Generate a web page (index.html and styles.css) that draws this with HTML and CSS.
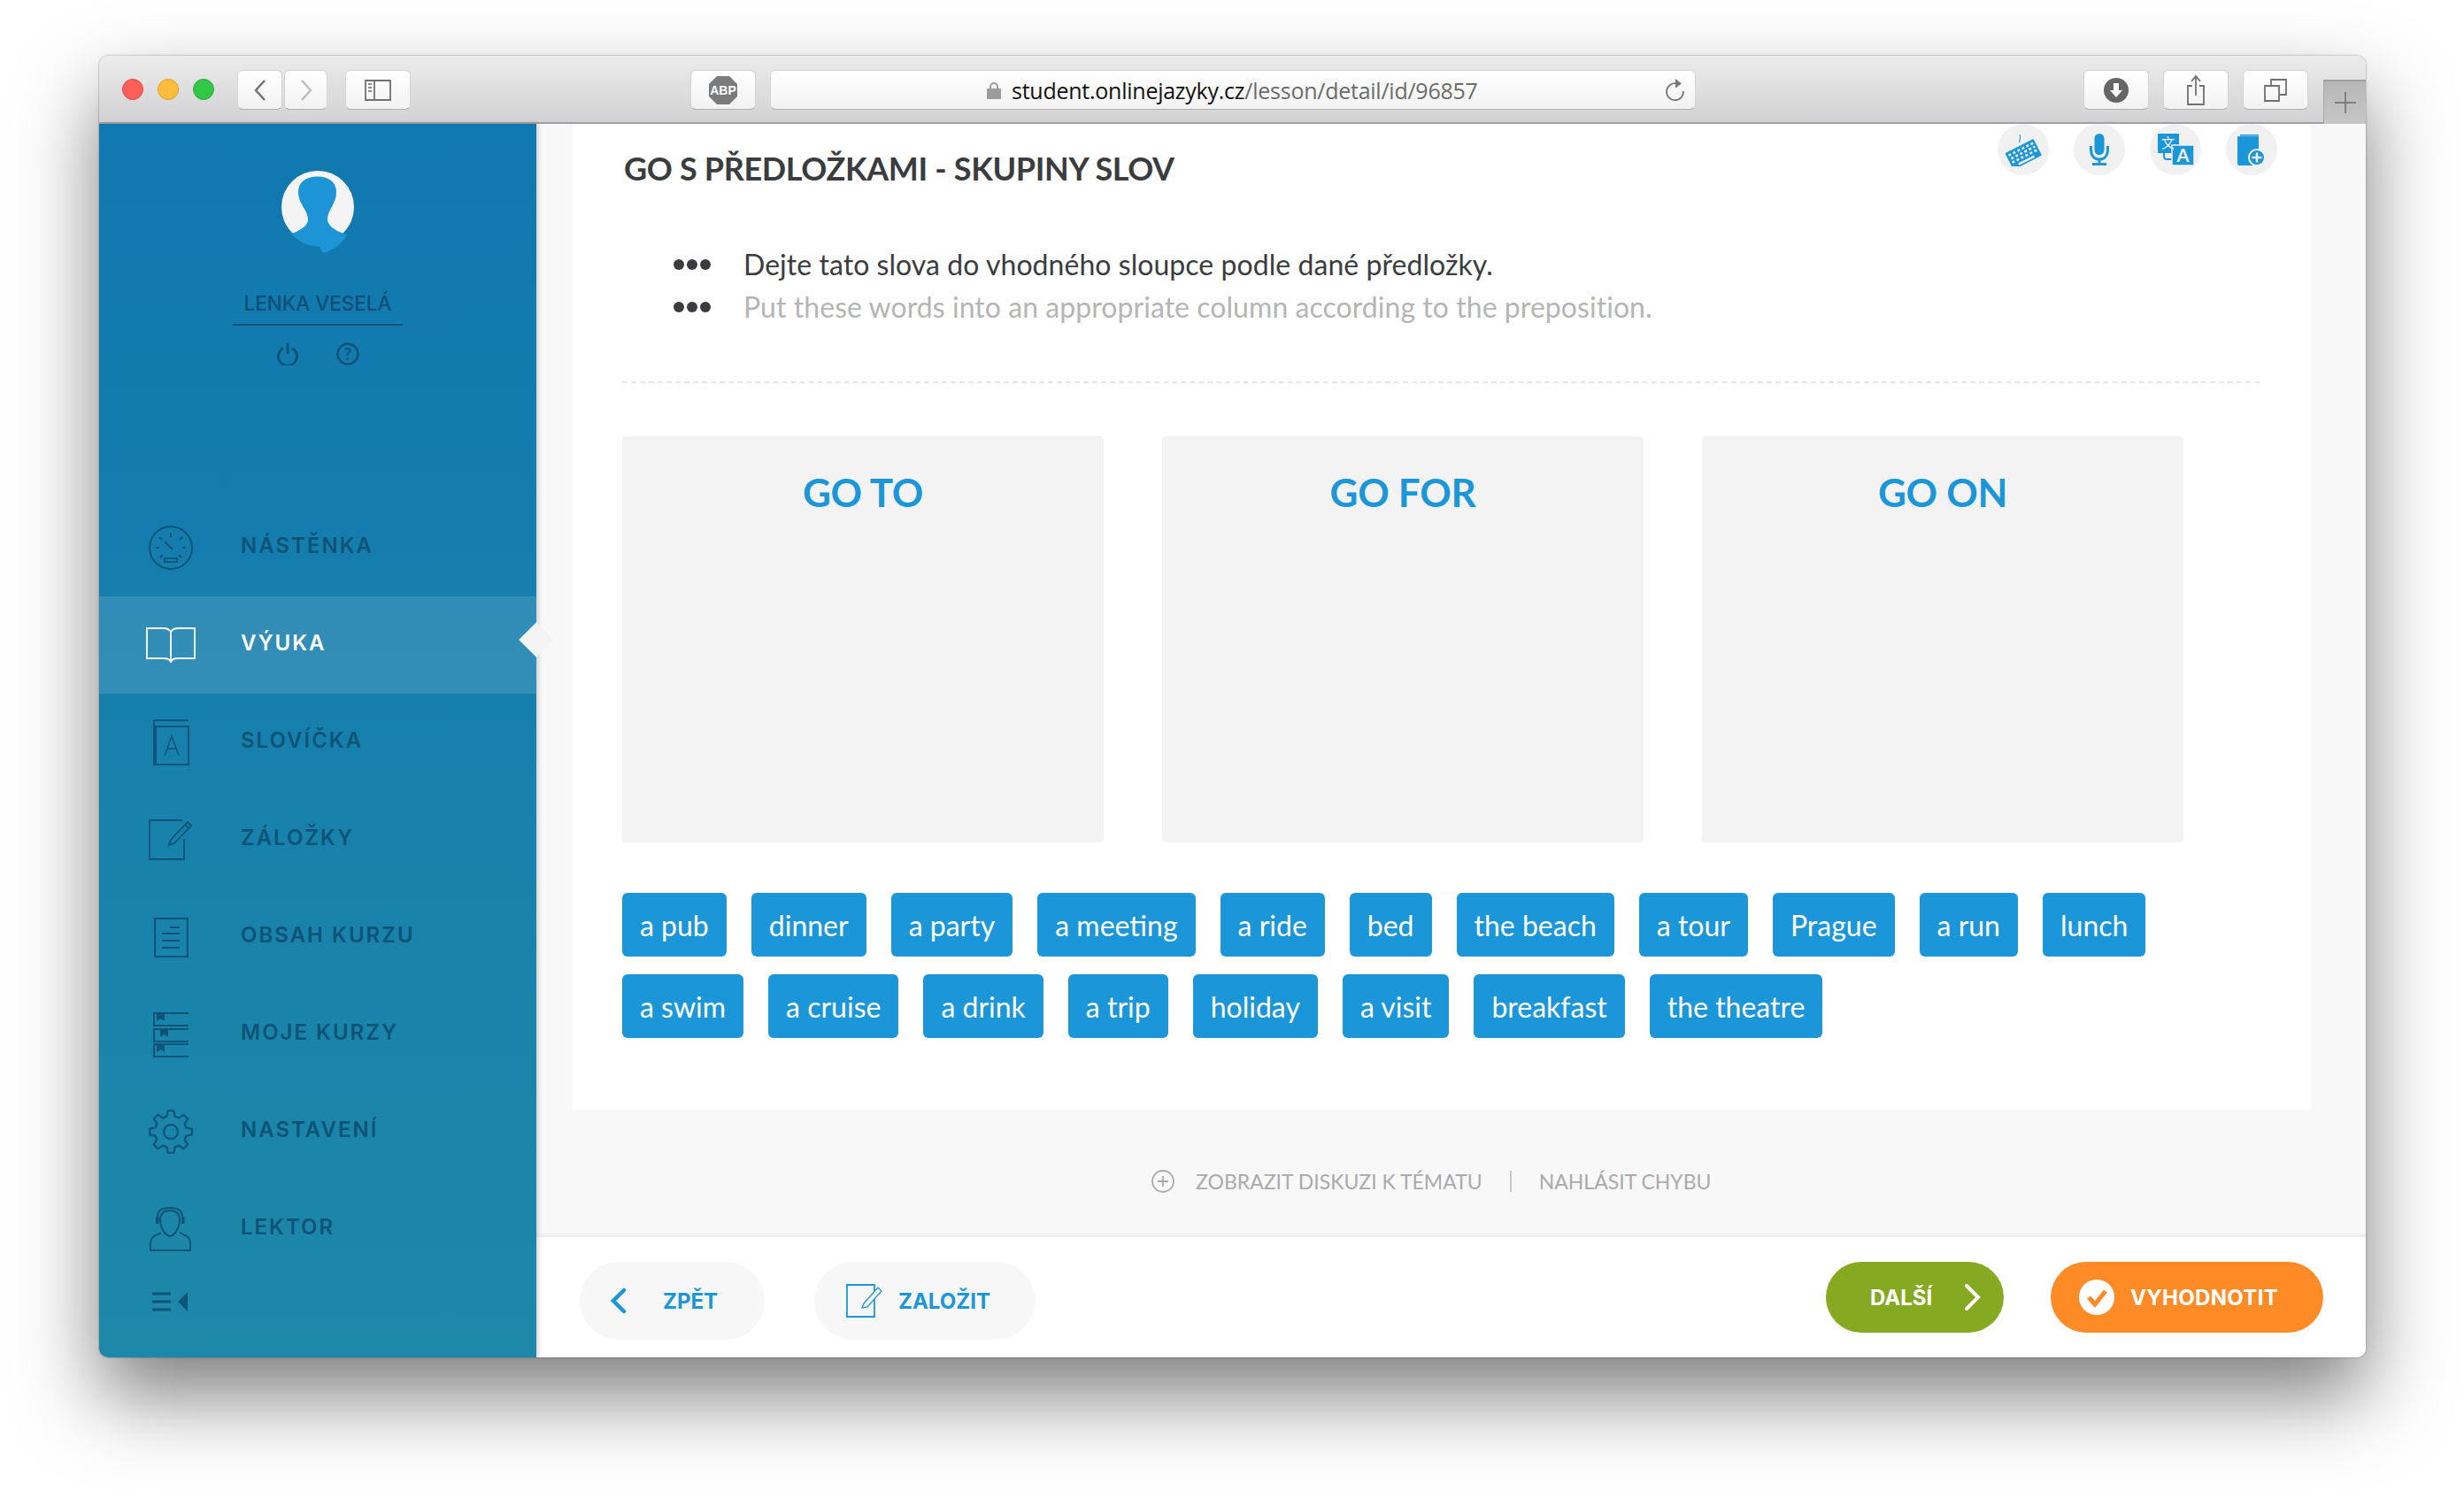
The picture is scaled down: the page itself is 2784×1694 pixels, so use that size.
FILE: index.html

```html
<!DOCTYPE html>
<html lang="cs">
<head>
  <meta charset="UTF-8" />
  <title>Go s předložkami - skupiny slov</title>
  <link rel="stylesheet" href="styles.css">
</head>
<body>
<div class="window">
  <div class="toolbar">
    <div class="lights"><i class="red"></i><i class="yellow"></i><i class="green"></i></div>
    <div class="tb-btn nav-back"><svg width="16" height="26" viewBox="0 0 16 26"><path d="M13 2 3 13l10 11" fill="none" stroke="#6f6f6f" stroke-width="2.4"/></svg></div>
    <div class="tb-btn nav-fwd"><svg width="16" height="26" viewBox="0 0 16 26"><path d="m3 2 10 11L3 24" fill="none" stroke="#bcbcbc" stroke-width="2.4"/></svg></div>
    <div class="tb-btn side-btn"><svg width="30" height="24" viewBox="0 0 30 24"><path d="M1 1h28v22H1zM11 1v22" fill="none" stroke="#707070" stroke-width="1.8"/><path d="M4 5h4M4 9h4M4 13h4" stroke="#8a8a8a" stroke-width="2"/></svg></div>
    <div class="tb-btn abp-btn"><svg width="34" height="34" viewBox="0 0 34 34"><path d="M10 1h14l9 9v14l-9 9H10l-9-9V10z" fill="#7b7b7b"/><text x="17" y="22" text-anchor="middle" class="abp-text">ABP</text></svg></div>
    <div class="tb-btn url-bar">
      <svg class="lock" width="16" height="20" viewBox="0 0 16 20"><path d="M4 9V6a4 4 0 0 1 8 0v3" fill="none" stroke="#9c9c9c" stroke-width="2"/><rect y="8" width="16" height="12" rx="1" fill="#9c9c9c"/></svg>
      <span class="url"><b>student.onlinejazyky.cz</b>/lesson/detail/id/96857</span>
      <svg class="reload" width="24" height="28" viewBox="0 0 24 28"><path d="M14 6.500A9.500 9.500 0 1 0 21 15" fill="none" stroke="#777" stroke-width="1.800"/><path d="M12 1l7 5.500-7 5z" fill="#777"/></svg>
    </div>
    <div class="tb-btn tb-right first"><svg width="30" height="30" viewBox="0 0 30 30"><circle cx="15" cy="15" r="14" fill="#666"/><path d="M12 7h6v8h4l-7 8-7-8h4z" fill="#fff"/></svg></div>
    <div class="tb-btn tb-right"><svg width="24" height="36" viewBox="0 0 24 36"><path d="M8 13H3v21h18V13h-5M12 24V3M7 8l5-6 5 6" fill="none" stroke="#707070" stroke-width="1.800"/></svg></div>
    <div class="tb-btn tb-right"><svg width="26" height="26" viewBox="0 0 26 26"><path d="M8 7V1h17v17h-7" fill="none" stroke="#707070" stroke-width="1.800"/><path d="M1 8h16v17H1z" fill="none" stroke="#707070" stroke-width="1.800"/></svg></div>
    <div class="new-tab"><svg width="24" height="24" viewBox="0 0 24 24"><path d="M12 0v24M0 12h24" stroke="#6e6e6e" stroke-width="1.500"/></svg></div>
  </div>

  <div class="app">
    <aside class="sidebar">
      <div class="profile">
        <svg class="avatar" width="84" height="94" viewBox="0 0 84 94">
          <circle cx="42" cy="41" r="41" fill="#f4f4f4"/>
          <path d="M42 6.500C28 6.500 20 13 20 24c0 14 11 20 11 31 0 7-9 13-19 16 6 7 16 14 32 15l4 7c12-3 22-11 27-21-12-3-22-10-22-17 0-11 10-17 10-31C63 13 55 6.500 42 6.500z" fill="#1c94d6"/>
        </svg>
        <div class="user-name">LENKA VESELÁ</div>
        <div class="user-links">
          <svg width="24" height="26" viewBox="0 0 24 26"><path d="M7 6.500a10.500 10.500 0 1 0 10 0M12 1v12" fill="none" stroke="#0e5378" stroke-width="3"/></svg>
          <svg width="26" height="26" viewBox="0 0 26 26"><circle cx="13" cy="13" r="11.500" fill="none" stroke="#0e5378" stroke-width="2.500"/><text x="13" y="19.500" text-anchor="middle" class="help-text">?</text></svg>
        </div>
      </div>

      <nav class="menu">
        <a class="menu-item"><span class="menu-icon">
          <svg width="50" height="50" viewBox="0 0 50 50" fill="none" stroke="#0e5378" stroke-width="1.800"><circle cx="25" cy="25" r="24"/><path d="M25 8v5M12 13l3 3M38 13l-3 3M8 25h4M38 25h4M13 36l3-3M37 36l-3-3M18 18l9 9" stroke-width="2"/><rect x="18" y="37" width="14" height="4"/></svg>
        </span><span class="menu-label">NÁSTĚNKA</span></a>
        <a class="menu-item active"><span class="menu-icon">
          <svg width="56" height="40" viewBox="0 0 56 40" fill="none" stroke="#fff" stroke-width="1.800"><path d="M28 5c-2-3-5-4-8-4H1v34h19c4 0 7 1 8 4 1-3 4-4 8-4h19V1H36c-3 0-6 1-8 4zM28 5v34"/></svg>
        </span><span class="menu-label">VÝUKA</span></a>
        <a class="menu-item"><span class="menu-icon">
          <svg width="42" height="52" viewBox="0 0 42 52" fill="none" stroke="#0e5378" stroke-width="1.800"><path d="M41 1H2v50h39V8H3" /><path d="M3 8v43" stroke-width="4"/><path d="m14 41 8-22 8 22M17 33h11" stroke-width="1.500"/></svg>
        </span><span class="menu-label">SLOVÍČKA</span></a>
        <a class="menu-item"><span class="menu-icon">
          <svg width="50" height="46" viewBox="0 0 50 46" fill="none" stroke="#0e5378" stroke-width="1.800"><path d="M38 1H1v44h39V22"/><path d="m25 23 19-20 4 4-19 20-6 2zM41 6l4 4"/></svg>
        </span><span class="menu-label">ZÁLOŽKY</span></a>
        <a class="menu-item"><span class="menu-icon">
          <svg width="39" height="45" viewBox="0 0 39 45" fill="none" stroke="#0e5378" stroke-width="2.200"><path d="M1 1h37v43H1z"/><path d="M18 11h11M9 18h20M9 26h20M9 34h20"/></svg>
        </span><span class="menu-label">OBSAH KURZU</span></a>
        <a class="menu-item"><span class="menu-icon">
          <svg width="40" height="51" viewBox="0 0 40 51" fill="none" stroke="#0e5378" stroke-width="2.200"><path d="M40 1H1v14h39M40 19H1v14h39M40 36H1v14h39"/><path d="M4 1h9v9l-4.500-3L4 10zM8 19h9v9l-4.500-3L8 28zM4 36h9v9l-4.500-3L4 45z" fill="#0e5378" stroke="none"/></svg>
        </span><span class="menu-label">MOJE KURZY</span></a>
        <a class="menu-item"><span class="menu-icon">
          <svg width="50" height="50" viewBox="0 0 50 50" fill="none" stroke="#0e5378" stroke-width="2.200" stroke-linejoin="round"><circle cx="25" cy="25" r="8"/><path d="M20.340 7.610 21.660 1.230h6.680l1.320 6.380L34 9.410l5.440-3.580 4.730 4.730L40.590 16l1.800 4.340 6.380 1.320v6.680l-6.380 1.320L40.590 34l3.580 5.440-4.730 4.730L34 40.590l-4.340 1.800-1.320 6.380h-6.680l-1.320-6.380L16 40.590l-5.440 3.580-4.730-4.730L9.410 34l-1.800-4.340-6.380-1.320v-6.680l6.380-1.320L9.410 16l-3.580-5.440 4.730-4.730L16 9.410z"/></svg>
        </span><span class="menu-label">NASTAVENÍ</span></a>
        <a class="menu-item"><span class="menu-icon">
          <svg width="48" height="50" viewBox="0 0 48 50" fill="none" stroke="#0e5378" stroke-width="2"><path d="M9 11C9 4 15 1 23 1s14 3 14 10"/><path d="M7 11h3.500v8H7zM36 11h3.500v8H36z" fill="#0e5378" stroke="none"/><path d="M23 4c-8 0-11 5-11 11 0 8 5 17 11 18 6-1 11-10 11-18 0-6-3-11-11-11z"/><path d="M13 29c-5 3-12 4-12 11v9h45v-9c0-7-7-8-12-11"/></svg>
        </span><span class="menu-label">LEKTOR</span></a>
      </nav>

      <div class="collapse"><svg width="40" height="22" viewBox="0 0 40 22"><path d="M0 2h21M0 11h21M0 20h21" stroke="#0e5378" stroke-width="3"/><path d="M40 0v22L29 11z" fill="#0e5378"/></svg></div>
    </aside>

    <main class="main">
      <div class="content">
        <section class="panel">
          <div class="panel-head">
            <h1>GO S PŘEDLOŽKAMI - SKUPINY SLOV</h1>
            <div class="tools">
              <span class="tool"><svg width="42" height="38" viewBox="0 0 42 38"><path d="M17 11c-1-3 2-5 0-9" fill="none" stroke="#1b96d9" stroke-width="1.200"/><g transform="rotate(-27 21 24)"><rect x="3" y="14" width="36" height="21" rx="1.500" fill="#1b96d9"/><path d="M5.500 18h32M6.500 22.500h30M5.500 27h32" stroke="#f1f1f1" stroke-width="2.600" stroke-dasharray="3 2.600"/><path d="M11 32h20" stroke="#f1f1f1" stroke-width="2.400"/></g></svg></span>
              <span class="tool"><svg width="22" height="36" viewBox="0 0 22 36"><rect x="5.500" width="11" height="24" rx="5.500" fill="#1b96d9"/><path d="M1.500 14v4c0 7 4 11 9.500 11s9.500-4 9.500-11v-4M11 29v5" fill="none" stroke="#1b96d9" stroke-width="3"/><path d="M3 33h16v3H3z" fill="#1b96d9"/></svg></span>
              <span class="tool"><svg width="42" height="36" viewBox="0 0 42 36"><rect x="1" width="24" height="22" fill="#1b96d9"/><path d="M8 22v4c0 2 2 3 4 3h5" fill="none" stroke="#1b96d9" stroke-width="2"/><rect x="17" y="13" width="25" height="23" fill="#1b96d9" stroke="#f1f1f1" stroke-width="1.500"/><text x="12.500" y="16" text-anchor="middle" class="tool-zh">文</text><text x="29.500" y="31.500" text-anchor="middle" class="tool-a">A</text></svg></span>
              <span class="tool"><svg width="32" height="36" viewBox="0 0 32 36"><path d="M3 1h21v1.500H3z" fill="#1b96d9"/><path d="M0 4c0-1 1-1 2-1h22v33H2c-1 0-2-1-2-2z" fill="#1b96d9"/><circle cx="22" cy="27" r="9" fill="#1b96d9" stroke="#f1f1f1" stroke-width="2"/><path d="M22 21.500v11M16.500 27h11" stroke="#f1f1f1" stroke-width="2.500"/></svg></span>
            </div>
          </div>

          <div class="instructions">
            <div class="instr-line"><span class="dots"><i></i><i></i><i></i></span>Dejte tato slova do vhodného sloupce podle dané předložky.</div>
            <div class="instr-line muted"><span class="dots"><i></i><i></i><i></i></span>Put these words into an appropriate column according to the preposition.</div>
          </div>

          <div class="columns">
            <div class="column">GO TO</div>
            <div class="column">GO FOR</div>
            <div class="column">GO ON</div>
          </div>

          <div class="words">
            <span class="word">a pub</span>
            <span class="word">dinner</span>
            <span class="word">a party</span>
            <span class="word">a meeting</span>
            <span class="word">a ride</span>
            <span class="word">bed</span>
            <span class="word">the beach</span>
            <span class="word">a tour</span>
            <span class="word">Prague</span>
            <span class="word">a run</span>
            <span class="word">lunch</span>
            <span class="word">a swim</span>
            <span class="word">a cruise</span>
            <span class="word">a drink</span>
            <span class="word">a trip</span>
            <span class="word">holiday</span>
            <span class="word">a visit</span>
            <span class="word">breakfast</span>
            <span class="word">the theatre</span>
          </div>
        </section>

        <div class="links">
          <svg width="26" height="26" viewBox="0 0 26 26" fill="none" stroke="#aaa" stroke-width="1.800"><circle cx="13" cy="13" r="12"/><path d="M13 7v12M7 13h12"/></svg>
          <span class="link-a">ZOBRAZIT DISKUZI K TÉMATU</span>
          <span class="link-sep"></span>
          <span>NAHLÁSIT CHYBU</span>
        </div>
      </div>

      <div class="actions">
        <a class="pill back"><svg width="18" height="30" viewBox="0 0 18 30"><path d="M15 3 3 15l12 12" fill="none" stroke="#1b96d9" stroke-width="4.500" stroke-linecap="round"/></svg>ZPĚT</a>
        <a class="pill bookmark"><svg width="41" height="38" viewBox="0 0 41 38" fill="none" stroke="#1b96d9" stroke-width="1.800"><path d="M1 1h31v36H1z"/><path d="m20 22 16-18 4 4-16 18-6 1z" fill="#f7f7f7" stroke-width="1.300"/></svg>ZALOŽIT</a>
        <a class="pill next">DALŠÍ<svg width="20" height="30" viewBox="0 0 20 30"><path d="m3 2 13 13L3 28" fill="none" stroke="#fff" stroke-width="4" stroke-linecap="round"/></svg></a>
        <a class="pill submit"><svg width="40" height="40" viewBox="0 0 40 40"><circle cx="20" cy="20" r="20" fill="#fff"/><path d="m11 20 7 8 12-15" fill="none" stroke="#ff8b26" stroke-width="5"/></svg>VYHODNOTIT</a>
      </div>
    </main>
  </div>
</div>
</body>
</html>
```

FILE: styles.css

```css
* { box-sizing: border-box; }
html, body { margin: 0; height: 100%; }
body { background: #fff; font-family: Lato, "Noto Sans", sans-serif; color: #3a3c40; overflow: hidden; }
.window { width: 2561px; height: 1471px; margin: 63px 0 0 112px; border-radius: 10px; display: flex; flex-direction: column; overflow: hidden; box-shadow: 0 44px 90px rgba(0, 0, 0, 0.5), 0 0 2px rgba(0, 0, 0, 0.5); }

.toolbar { height: 77px; flex: none; display: flex; align-items: flex-start; padding: 16px 0 0 26px; background: linear-gradient(#ececec, #d2d1d3); border-bottom: 2px solid #a2a1a4; position: relative; }
.lights { display: flex; gap: 16px; margin: 10px 26px 0 0; }
.lights i { display: block; width: 24px; height: 24px; border-radius: 50%; }
.red { background: #fc5f58; border: 1px solid #df4a43; }
.yellow { background: #fdbc3a; border: 1px solid #dfa02c; }
.green { background: #33c748; border: 1px solid #2aaa3b; }
.tb-btn { height: 45px; display: flex; align-items: center; justify-content: center; background: linear-gradient(#fff, #f2f2f2); border: 1px solid #d3d2d4; border-bottom-color: #aeadaf; border-radius: 6px; flex: none; }
.nav-back { width: 51px; margin-right: 2px; }
.nav-fwd { width: 49px; margin-right: 20px; }
.side-btn { width: 74px; margin-right: 316px; }
.abp-btn { width: 74px; margin-right: 16px; }
.abp-text { font: 700 14px "Liberation Sans", sans-serif; fill: #fff; }
.url-bar { width: 1046px; justify-content: flex-start; padding-left: 244px; margin-right: 438px; }
.lock { margin-right: 12px; }
.url { font-family: "Open Sans", sans-serif; font-size: 25px; color: #6b6b6b; letter-spacing: -0.25px; }
.url b { font-weight: 400; color: #111; }
.reload { margin-left: auto; margin-right: 10px; }
.tb-right { width: 74px; margin-right: 16px; }
.new-tab { position: absolute; top: 27px; right: 0; width: 48px; height: 50px; display: flex; align-items: center; justify-content: center; background: linear-gradient(#b6b6b6, #c6c6c6); border-top: 2px solid #9e9e9e; border-left: 1px solid #a8a8a8; }

.app { flex: 1; display: flex; min-height: 0; }

.sidebar { width: 494px; flex: none; background: linear-gradient(#1078b0, #1d88a8); display: flex; flex-direction: column; position: relative; z-index: 2; box-shadow: 2px 0 5px rgba(0, 0, 0, 0.18); }
.profile { height: 424px; flex: none; display: flex; flex-direction: column; align-items: center; padding-top: 53px; }
.avatar { margin: 0 0 0 -1px; }
.user-name { width: 192px; margin-top: 42px; padding-bottom: 10px; text-align: center; border-bottom: 2px solid #0d4f76; color: #0d4f76; font-family: Inter, sans-serif; font-size: 22.500px; font-weight: 500; white-space: nowrap; }
.user-links { display: flex; align-items: center; gap: 43px; margin-top: 19px; }
.help-text { font: 700 19px Lato, sans-serif; fill: #0e5378; }
.menu-item { height: 110px; display: flex; align-items: center; padding-left: 53px; color: #0e5378; font-family: Inter, sans-serif; font-size: 24px; font-weight: 600; letter-spacing: 2px; position: relative; }
.menu-icon { width: 56px; margin-right: 51px; display: flex; justify-content: center; }
.menu-label { margin-bottom: 6px; }
.active { background: rgba(255, 255, 255, 0.12); color: #fff; }
.active::after { content: ""; position: absolute; right: -14px; top: 35px; width: 28px; height: 28px; background: #f3f3f3; transform: rotate(45deg); }
.collapse { padding: 16px 0 0 60px; }

.main { flex: 1; min-width: 0; display: flex; flex-direction: column; overflow: hidden; }
.content { flex: 1; background: #f8f8f8; padding: 0 62px 0 41px; }
.panel { height: 1114px; background: #fff; padding: 0 32px 0 56px; overflow: hidden; }
.panel-head { display: flex; justify-content: space-between; align-items: flex-start; padding-right: 6px; }
h1 { margin: 28px 0 0 2px; font-size: 36px; font-weight: 700; letter-spacing: -0.35px; color: #3a3c40; white-space: nowrap; }
.tools { display: flex; gap: 28px; margin-top: 0; }
.tool { width: 58px; height: 58px; border-radius: 50%; background: #f1f1f1; display: flex; align-items: center; justify-content: center; }
.tool-a { font: 700 20px Lato, sans-serif; fill: #f1f1f1; }
.tool-zh { font: 400 15px "Noto Sans CJK SC", sans-serif; fill: #f1f1f1; }

.instructions { margin: 63px 26px 0 0; padding: 0 0 60px 58px; border-bottom: 2px dashed #e6e6e6; font-size: 32px; letter-spacing: 0.05px; line-height: 48px; }
.instr-line { display: flex; align-items: center; white-space: nowrap; }
.muted { color: #b5b5b5; }
.dots { display: flex; gap: 3px; width: 79px; flex: none; }
.dots i { display: block; width: 12px; height: 12px; border-radius: 50%; background: #3a3c40; }

.columns { display: flex; gap: 66px; margin-top: 60px; }
.column { width: 544px; height: 459px; background: #f3f3f3; border-radius: 4px; padding-top: 37px; text-align: center; color: #1b96d9; font-size: 44px; font-weight: 700; letter-spacing: -0.3px; }

.words { display: flex; flex-wrap: wrap; gap: 20px 28px; margin-top: 57px; padding-right: 60px; }
.word { height: 72px; padding: 0 20px; display: flex; align-items: center; background: #1b96d9; color: #fff; border-radius: 6px; font-size: 32px; white-space: nowrap; }

.links { height: 144px; display: flex; align-items: center; padding: 18px 0 0 654px; color: #aaa; font-size: 23px; white-space: nowrap; }
.link-a { margin-left: 24px; }
.link-sep { width: 2px; height: 24px; background: #c8c8c8; margin: 0 31px; }

.actions { height: 136px; flex: none; background: #fff; display: flex; align-items: flex-start; padding: 28px 48px 0 49px; box-shadow: 0 -2px 4px rgba(0, 0, 0, 0.07); position: relative; }
.pill { display: flex; align-items: center; height: 80px; border-radius: 44px; font-family: Inter, sans-serif; font-size: 24px; font-weight: 700; white-space: nowrap; }
.back, .bookmark { height: 88px; background: #f7f7f7; color: #1b96d9; }
.back { width: 209px; padding-left: 35px; gap: 41px; margin-right: 56px; }
.bookmark { width: 250px; padding-left: 36px; gap: 18px; margin-right: auto; }
.next { width: 201px; background: #85a920; color: #fff; padding-left: 50px; gap: 36px; margin-right: 53px; }
.submit { width: 308px; background: #ff8b26; color: #fff; padding-left: 32px; gap: 18px; letter-spacing: 0.3px; }
```
